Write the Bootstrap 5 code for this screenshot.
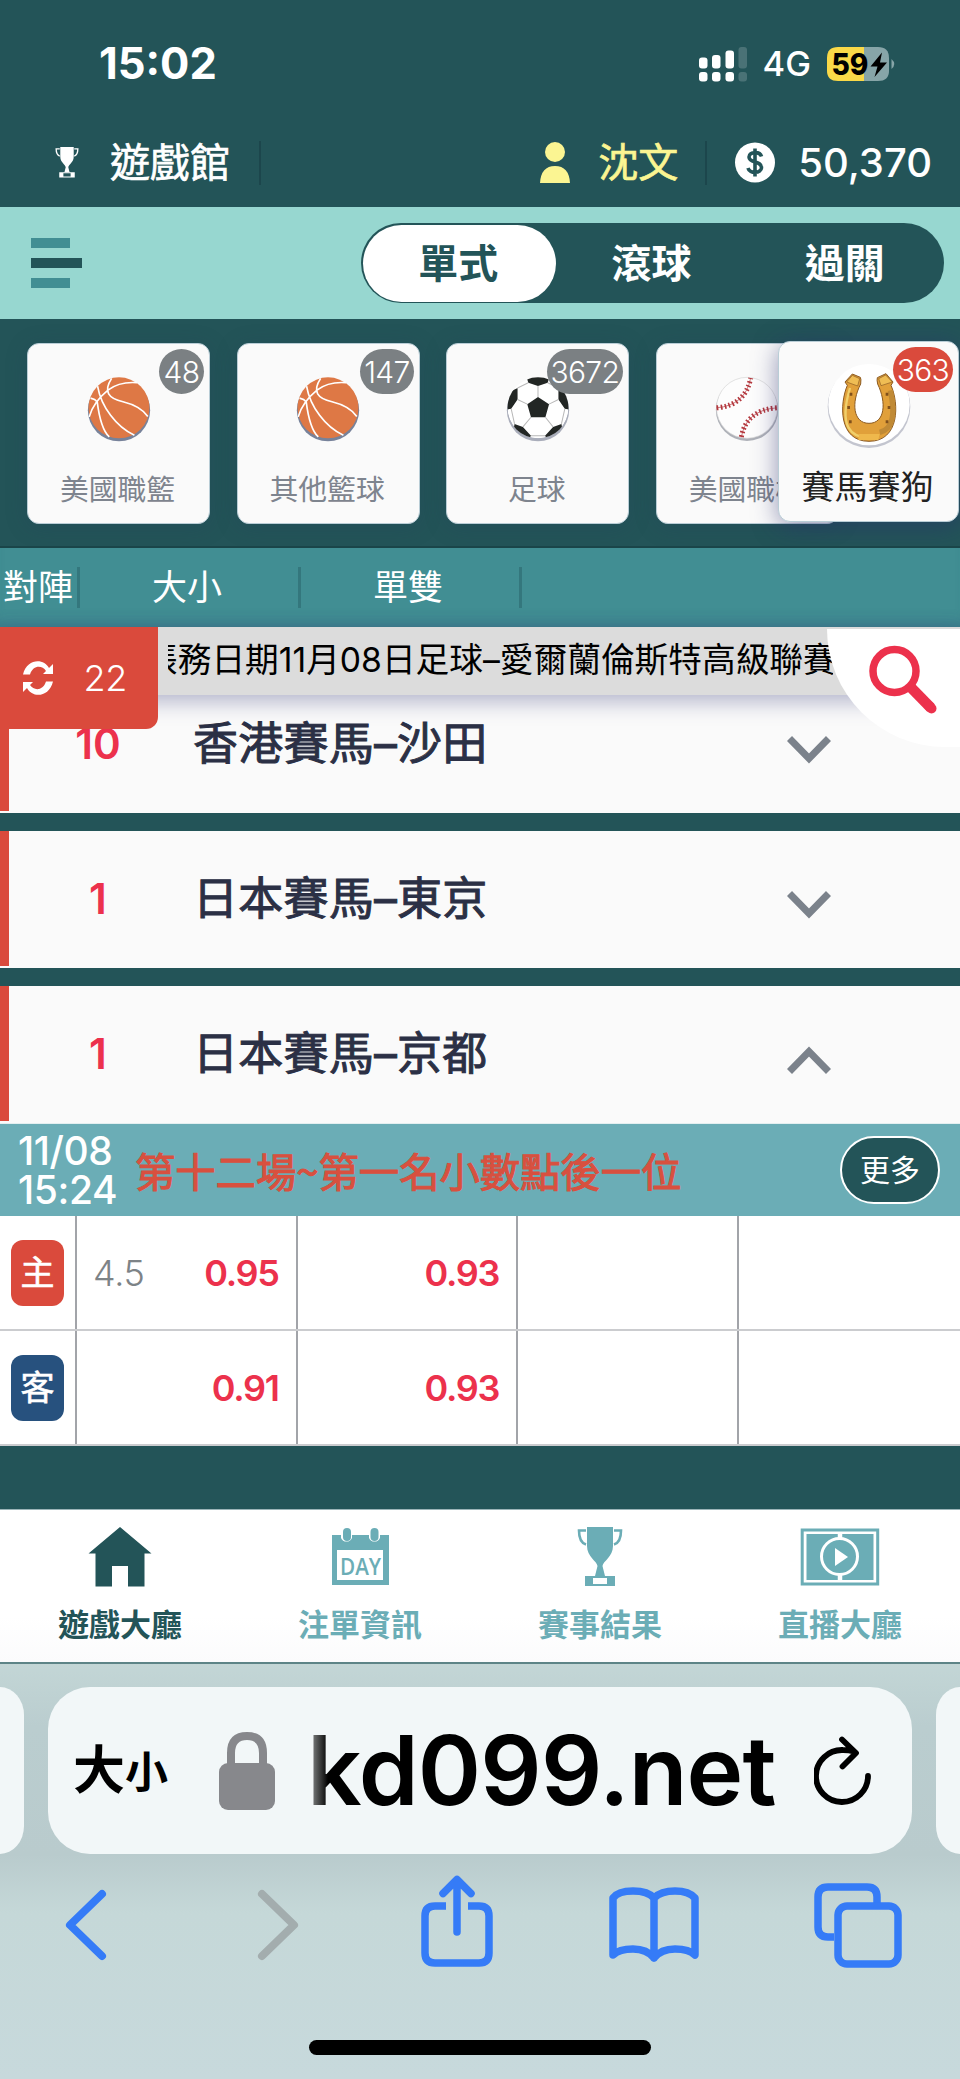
<!DOCTYPE html>
<html lang="zh-Hant">
<head>
<meta charset="utf-8">
<meta name="viewport" content="width=device-width, initial-scale=1">
<title>遊戲大廳</title>
<link rel="stylesheet" href="https://cdn.jsdelivr.net/npm/bootstrap@5.3.0/dist/css/bootstrap.min.css">
<style>
:root{--deep:#235458;--mint:#97d7d0;--teal:#418e93;--sky:#6badb6;--red:#da4a3c;--rose:#ec314c;--ink:#2b3045;--mist:#7b828b}
body{font-family:"Inter","Noto Sans CJK TC",sans-serif;background:var(--deep);width:960px;line-height:1;overflow-x:hidden}
svg{display:block;flex:none}
.status{height:121px;padding:7px 65px 0 99px}
.clock{font-size:43.5px;font-weight:700}
.net{font-size:34.5px;font-weight:500}
.account{height:86px;padding:0 28px 3px 55px;font-size:40px}
.account .hall,.account .user{-webkit-text-stroke:.7px currentColor}
.balance{font-weight:450}
.vline{width:2px;height:44px;background:#1c464c}
.user{color:#fbf592}
.modes{height:112px;background:var(--mint);padding:0 16px 0 31px}
.burger{gap:10px}
.burger i{height:10px;width:39px;background:var(--teal)}
.burger i:nth-child(2){width:51px;background:var(--deep)}
.switch{width:583px;height:80px;border-radius:40px;background:var(--deep);padding:1.5px;font-size:40px;font-weight:700;color:#fff}
.switch span{border-radius:39px;padding:1px 2px 0 0}
.switch .on{background:#fff;color:var(--deep)}
.sports{height:229px;padding:24px 0 0 27px;gap:26.6px;overflow:hidden;border-bottom:2px solid #1a4549}
.tile{width:183px;height:181px;flex:none;border-radius:12px;background:#fafafa;border:1px solid #b9cdd6;box-shadow:0 3px 22px rgba(35,60,90,.22);color:#7e848e;font-size:28.8px;padding-top:32px}
.tile .name{margin:33px 2px 0 0;white-space:nowrap}
.tile.active{right:1px;top:22px;width:181px;color:#222;font-size:33px;padding-top:20px}
.tile.active{box-shadow:0 4px 24px rgba(42,45,110,.5)}
.tile.active .name{margin-top:19px}
.count{top:5px;right:5px;height:45px;min-width:45px;border-radius:23px;background:#7b8083;color:#fff;font-size:30px;font-weight:350;padding:0 4px;letter-spacing:-.7px}
.tile.active .count{background:var(--red)}
.bets{height:79px;background:var(--teal);color:#fff;font-size:35px;box-shadow:inset 0 -12px 12px -8px rgba(40,90,120,.35)}
.bets .sep{width:221px;padding-right:7px;background:linear-gradient(#34777d,#34777d) right 0 top 19px/3px 41px no-repeat}
.bets .sep:first-child{width:80px;justify-content:flex-start!important;padding:0 0 0 3px}
.news{height:68px;background:#dcdcdc;left:0;top:0;width:960px;padding-left:168px;z-index:2;box-shadow:0 6px 22px rgba(70,75,130,.42)}
.news p{font-size:33.7px;height:66px;width:665px;color:#000;white-space:nowrap;overflow:hidden}
.timer{left:0;top:0;width:158px;height:102px;z-index:3;background:var(--red);color:#fff;border-radius:0 0 12px 0;font-size:36px;font-weight:350;padding:0 31px 0 21px;letter-spacing:-.4px}
.find{right:0;top:2px;width:133px;height:118px;z-index:3;background:#fff;border-radius:0 0 0 118px}
.board{padding-top:49px}
.league{height:137px;background:linear-gradient(var(--red),var(--red)) left top/9px 135px no-repeat #fafafa;margin-bottom:18px;color:var(--ink);font-size:45px;padding:0 129px 2px 0}
.league span{-webkit-text-stroke:1px currentColor;letter-spacing:.3px}
.league b{width:193px;padding-left:3px;color:var(--rose);font-size:42px;font-weight:600;text-align:center}
.league svg{margin-top:12px}
.match{height:93px;margin-top:-18px;border-top:1px solid #e4eff0;background:var(--sky);color:#fff;padding:0 20px 0 18px}
.when{font-size:39px;line-height:39px;width:117px;letter-spacing:-.4px;font-weight:500}
.title{font-family:"Noto Sans CJK TC",sans-serif;font-size:40.3px;color:#d8503f;white-space:nowrap;-webkit-text-stroke:1.1px currentColor;padding-top:1px}
.more{width:100px;height:68px;border-radius:34px;border:2px solid #fff;background:var(--deep);color:#fff;font-size:30px}
.odds{height:115px;background:#fff;border-bottom:2px solid #cbcccf;font-size:36px;font-weight:600;color:var(--rose)}
.odds>div{width:220.6px;border-right:2px solid #a2a4a9;padding:0 17px 0 16px;letter-spacing:-1.3px}
.odds>div:first-child{width:77px;padding:0 0 0 11px;letter-spacing:0}
.odds>div:last-child{border:0;width:221px}
.odds small{font-size:36px;font-weight:350;color:#7d8387;letter-spacing:-.3px}
.side{width:53px;height:66px;border-radius:12px;background:var(--red);color:#fff;font-size:34px;-webkit-text-stroke:.6px currentColor;font-weight:400}
.side.away{background:#27517e}
.dock{height:155px;margin-top:63px;border-top:1px solid #9bb4b8;border-bottom:2px solid #5d8487;background:linear-gradient(#fff 70%,#fbfbfc);color:var(--sky);font-size:31px;font-weight:700;padding-top:17px}
.dock>div{width:240px;gap:22px}
.dock .here{color:var(--deep)}
.chrome{height:415px;background:linear-gradient(#c3d6d6 0,#bacdcf 15%,#b9cbcd 46%,#c5d8d8 60%,#c7d9dc 100%)}
.sidetab{width:24px;height:167px;background:#f2f7f8}
.addr{width:864px;height:167px;border-radius:42px;background:#f2f7f8;color:#000;padding:0 41px 0 25px}
.aa{font-weight:700;font-size:52px;width:146px;height:74px}
.aa small{font-size:43px;font-weight:700;padding-top:3px}
.url{font-size:96px;font-weight:600;width:478px;margin-left:27px;letter-spacing:-.8px;background:linear-gradient(90deg,#8a8d8d 8px,#000 26px);-webkit-background-clip:text;background-clip:text;color:transparent;padding:10px 0 12px 5px}
.tools{padding:21px 58px 0 65px}
.homebar{width:342px;height:15px;border-radius:8px;background:#000;margin-top:71px}
</style>
</head>
<body>
<svg width="0" height="0" class="position-absolute">
<defs>
<g id="cup"><path d="M10 0H36V19C36 30 26 34 25.500 39L28 49H18L20.500 39C20 34 10 30 10 19Z"/><path d="M9 3.500H2C2 11 4 16 9 17.500M37 3.500H44C44 11 42 16 37 17.500" fill="none" stroke="currentColor" stroke-width="2.600"/><path fill-rule="evenodd" d="M8 49H38V59H8ZM16 51V57H30V51Z"/></g>
<g id="bball"><circle cx="95" cy="95" r="91" fill="#de7845"/><path d="M10 66Q24 69 30 77Q40 157 66 182M6 122Q18 78 62 42Q97 16 149 20M73 7C47 47 64 67 107 77Q160 90 181 121M31 30C42 92 87 152 141 177" fill="none" stroke="#fff" stroke-width="5"/></g>
</defs>
</svg>

<header class="text-white">
<div class="status d-flex justify-content-between align-items-center">
<span class="clock">15:02</span>
<div class="d-flex align-items-center">
<svg width="48" height="36" viewBox="0 0 48 36" fill="#fff"><rect y="11.500" width="8.500" height="11" rx="3"/><rect x="13" y="9" width="8.500" height="13.500" rx="3"/><rect x="26.500" y="4.500" width="8.500" height="18" rx="3"/><rect x="39.500" y="1" width="8.500" height="21.500" rx="3" opacity=".18"/><rect y="26" width="8.500" height="9.500" rx="3"/><rect x="13" y="26" width="8.500" height="9.500" rx="3"/><rect x="26.500" y="26" width="8.500" height="9.500" rx="3"/><rect x="39.500" y="26" width="8.500" height="9.500" rx="3" opacity=".18"/></svg>
<span class="net ms-3">4G</span>
<svg class="ms-3" width="68" height="35" viewBox="0 0 68 35"><path d="M36 0H51Q62 0 62 11V24Q62 34 51 34H36Z" fill="#87a5a8"/><path d="M11 0H37V34H11Q0 34 0 24V11Q0 0 11 0Z" fill="#fad948"/><path d="M64.500 12Q70 17 64.500 22Z" fill="#87a5a8"/><text x="4.500" y="28" font-size="30" font-weight="800" textLength="37" lengthAdjust="spacingAndGlyphs">59</text><path d="M55 5.500L43.500 19.500H50.500L47.500 30L60 15.500H53Z"/></svg>
</div>
</div>
<div class="account d-flex align-items-center">
<svg width="24" height="31" viewBox="0 0 46 60" fill="currentColor"><use href="#cup"/></svg>
<span class="hall" style="margin-left:31px">遊戲館</span>
<span class="vline" style="margin-left:29px"></span>
<svg class="ms-auto" width="30" height="42" viewBox="0 0 30 42" fill="#fbf592"><ellipse cx="15" cy="10" rx="10" ry="10"/><path d="M0 41Q1 24 15 24T30 41Z"/></svg>
<span class="user" style="margin-left:28px">沈文</span>
<span class="vline" style="margin-left:27px;margin-right:28px"></span>
<svg width="40" height="41" viewBox="0 0 40 41"><circle cx="20" cy="20.500" r="20" fill="#fff"/><path d="M26.500 14.500C25 9 14 9.500 14 15C14 21.500 26.500 18.500 26.500 25.500C26.500 31.500 14.500 32 13 26M20 6.500V34.500" fill="none" stroke="#235458" stroke-width="3.600"/></svg>
<span class="balance" style="margin-left:23px">50,370</span>
</div>
</header>

<nav class="modes d-flex justify-content-between align-items-center">
<div class="burger d-flex flex-column"><i></i><i></i><i></i></div>
<div class="switch d-flex">
<span class="on flex-fill d-flex align-items-center justify-content-center">單式</span>
<span class="flex-fill d-flex align-items-center justify-content-center">滾球</span>
<span class="flex-fill d-flex align-items-center justify-content-center">過關</span>
</div>
</nav>

<section class="sports d-flex position-relative">
<div class="tile position-relative d-flex flex-column align-items-center">
<svg width="64" height="67" viewBox="0 0 190 200"><circle cx="95" cy="102" r="93" fill="#77829a"/><use href="#bball"/></svg>
<span class="name">美國職籃</span><span class="count position-absolute d-flex align-items-center justify-content-center">48</span></div>
<div class="tile position-relative d-flex flex-column align-items-center">
<svg width="64" height="67" viewBox="0 0 190 200"><circle cx="95" cy="102" r="93" fill="#77829a"/><use href="#bball"/></svg>
<span class="name">其他籃球</span><span class="count position-absolute d-flex align-items-center justify-content-center">147</span></div>
<div class="tile position-relative d-flex flex-column align-items-center">
<svg width="64" height="67" viewBox="0 0 190 200"><circle cx="95" cy="102" r="93" fill="#a9adba"/><clipPath id="ballclip"><circle cx="95" cy="95" r="91"/></clipPath><g clip-path="url(#ballclip)"><circle cx="95" cy="95" r="91" fill="#fff"/><g fill="#222624"><path d="M95 63L128 84L117 123H74L63 84ZM60 0H130L124 20L95 30L66 20ZM0 60L22 42L34 36V70L15 98L0 100ZM190 60L168 42L156 36V70L175 98L190 100ZM25 143L50 152L74 178L60 200L20 170ZM165 143L140 152L116 178L130 200L170 170Z"/></g><path d="M95 30V63M34 70L63 84M156 70L128 84M74 123L50 152M117 123L140 152M15 98L25 143M175 98L165 143M74 178H116M34 36L66 20M156 36L124 20" fill="none" stroke="#b8b8b8" stroke-width="3"/></g></svg>
<span class="name">足球</span><span class="count position-absolute d-flex align-items-center justify-content-center">3672</span></div>
<div class="tile position-relative d-flex flex-column align-items-center">
<svg width="64" height="67" viewBox="0 0 190 200"><circle cx="95" cy="101" r="93" fill="#aeb1b8"/><circle cx="95" cy="95" r="91" fill="#fdfdfd" stroke="#d5d5d5" stroke-width="2"/><g fill="none" stroke="#b4383e"><path d="M4 95Q90 88 106 6M184 95Q92 102 78 183" stroke-width="2"/><path d="M4 95Q90 88 106 6M184 95Q92 102 78 183" stroke-width="15" stroke-dasharray="5 7"/></g></svg>
<span class="name">美國職棒</span></div>
<div class="tile active position-absolute d-flex flex-column align-items-center">
<svg width="88" height="90" viewBox="0 0 264 270"><circle cx="132" cy="134" r="124" fill="#c3c5cf"/><circle cx="132" cy="128" r="122" fill="#fff"/><path d="M82 36L106 46Q109 50 107 66C78 122 84 184 132 184S185 122 158 66Q155 54 157 47L183 35L204 60L198 70C222 124 225 238 132 238S44 124 67 70L60 60Z" fill="#e1a03a" stroke="#8c5b22" stroke-width="3"/><path d="M82 40L104 50L98 72L65 60ZM182 39L202 60L168 71L161 50Z" fill="#efbd54" stroke="#8c5b22" stroke-width="2"/><path d="M75 78C40 195 78 226 132 228" fill="none" stroke="#f1d06b" stroke-width="7"/><path d="M196 85C217 180 190 205 164 211" fill="none" stroke="#c08a36" stroke-width="16"/><path d="M102 216H164L160 234H100Z" fill="#efb84c"/><path d="M78 92V101M71 132V141M76 175V184M186 92V101M192 132V141M186 175V184" stroke="#80501c" stroke-width="8"/></svg>
<span class="name">賽馬賽狗</span><span class="count position-absolute d-flex align-items-center justify-content-center">363</span></div>
</section>

<div class="bets d-flex">
<div class="sep d-flex align-items-center justify-content-center">對陣</div>
<div class="sep d-flex align-items-center justify-content-center">大小</div>
<div class="sep d-flex align-items-center justify-content-center">單雙</div>
</div>

<main class="board position-relative">
<div class="news position-absolute"><p class="d-flex align-items-center m-0"><span style="margin-left:-24px">帳務日期11月08日足球–愛爾蘭倫斯特高級聯賽</span></p></div>
<div class="timer position-absolute d-flex align-items-center justify-content-between">
<svg width="34" height="34" viewBox="0 0 34 34" fill="#fff"><path d="M2 13.500C6 -3 23 -3 28 7L32 3V13H22L25 10C21 4 12 4 9 13.500ZM32 20.500C28 37 11 37 6 27L2 31V21H12L9 24C13 30 22 30 25 20.500Z"/></svg>22</div>
<div class="find position-absolute"><svg width="133" height="118" viewBox="0 0 133 118"><circle cx="67.500" cy="42" r="21.500" fill="none" stroke="#ec314c" stroke-width="7.500"/><path d="M83 57.500L104 79" stroke="#ec314c" stroke-width="10.500"/><path d="M102 77L104.500 79.500" stroke="#ec314c" stroke-width="10" stroke-linecap="round"/></svg></div>
<div class="league d-flex align-items-center"><b>10</b><span>香港賽馬–沙田</span><svg class="ms-auto" width="44" height="28" viewBox="0 0 44 28" fill="none" stroke="#7b828b" stroke-width="7"><path d="M2.500 2.500L22 22.500L41.500 2.500"/></svg></div>
<div class="league d-flex align-items-center"><b>1</b><span>日本賽馬–東京</span><svg class="ms-auto" width="44" height="28" viewBox="0 0 44 28" fill="none" stroke="#7b828b" stroke-width="7"><path d="M2.500 2.500L22 22.500L41.500 2.500"/></svg></div>
<div class="league d-flex align-items-center"><b>1</b><span>日本賽馬–京都</span><svg class="ms-auto" width="44" height="28" viewBox="0 0 44 28" fill="none" stroke="#7b828b" stroke-width="7"><path d="M2.500 25.500L22 5.500L41.500 25.500"/></svg></div>
<div class="match d-flex align-items-center">
<div class="when">11/08<br>15:24</div><div class="title">第十二場~第一名小數點後一位</div>
<div class="more ms-auto d-flex align-items-center justify-content-center">更多</div>
</div>
<div class="odds d-flex">
<div class="d-flex align-items-center"><span class="side d-flex align-items-center justify-content-center">主</span></div>
<div class="d-flex align-items-center justify-content-between"><small>4.5</small><span>0.95</span></div>
<div class="d-flex align-items-center justify-content-end">0.93</div><div></div><div></div>
</div>
<div class="odds d-flex">
<div class="d-flex align-items-center"><span class="side away d-flex align-items-center justify-content-center">客</span></div>
<div class="d-flex align-items-center justify-content-end">0.91</div>
<div class="d-flex align-items-center justify-content-end">0.93</div><div></div><div></div>
</div>
</main>

<nav class="dock d-flex">
<div class="here d-flex flex-column align-items-center"><svg width="64" height="60" viewBox="0 0 64 60" fill="currentColor"><path d="M32 0L63.500 26.500H56.500V59.500H40V39H24V59.500H7.500V26.500H.5Z"/></svg><span>遊戲大廳</span></div>
<div class="d-flex flex-column align-items-center"><svg width="57" height="60" viewBox="0 0 57 60"><path fill-rule="evenodd" fill="currentColor" d="M0 8H9V11A6 6 0 0 0 20 11V8H37V11A6 6 0 0 0 48 11V8H57V58H0ZM5 23V53H51V23Z"/><rect x="11" y="1" width="8" height="13" rx="4" fill="currentColor"/><rect x="38.500" y="1" width="8" height="13" rx="4" fill="currentColor"/><text x="8" y="47.500" font-family="Open Sans" font-size="23.500" font-weight="600" fill="currentColor" textLength="41" lengthAdjust="spacingAndGlyphs">DAY</text></svg><span>注單資訊</span></div>
<div class="d-flex flex-column align-items-center"><svg width="46" height="60" viewBox="0 0 46 60" fill="currentColor"><use href="#cup"/></svg><span>賽事結果</span></div>
<div class="d-flex flex-column align-items-center"><svg width="80" height="60" viewBox="0 0 80 60"><rect x="2.200" y="3" width="75.500" height="54" fill="none" stroke="currentColor" stroke-width="3"/><path d="M6.500 7H73.500V53H6.500Z" fill="currentColor"/><path d="M40 7V53" stroke="#fff" stroke-width="4.500"/><circle cx="39.500" cy="29.500" r="18" fill="currentColor" stroke="#fff" stroke-width="3"/><path d="M35 21V39L48 30Z" fill="#fff"/></svg><span>直播大廳</span></div>
</nav>

<footer class="chrome d-flex flex-column align-items-center">
<div class="w-100 d-flex justify-content-between" style="padding-top:23px">
<div class="sidetab" style="border-radius:0 36px 36px 0/0 42px 42px 0"></div>
<div class="addr d-flex align-items-center">
<div class="aa d-flex align-items-center">大<small>小</small></div>
<svg width="56" height="78" viewBox="0 0 56 78"><path d="M12 36V21Q12 4 28 4T44 21V36" fill="none" stroke="#87888c" stroke-width="8"/><rect y="31" width="56" height="47" rx="9" fill="#87888c"/></svg>
<span class="url">kd099.net</span>
<svg class="ms-auto" width="57" height="70" viewBox="0 0 57 70" fill="none" stroke="#000" stroke-width="5.800" stroke-linecap="round" stroke-linejoin="round"><path d="M40 15.500Q35 14 29 14A26 26 0 1 0 54 40M28 3.500L42 17L28.500 30.500"/></svg>
</div>
<div class="sidetab" style="border-radius:36px 0 0 36px/42px 0 0 42px"></div>
</div>
<div class="tools w-100 d-flex">
<svg width="42" height="94" viewBox="0 0 42 94" fill="none" stroke="#357bf7" stroke-width="8" stroke-linecap="round" stroke-linejoin="round"><path d="M37 19L5 50L37 81"/></svg>
<svg style="margin-left:150px" width="42" height="94" viewBox="0 0 42 94" fill="none" stroke="#a3adae" stroke-width="8" stroke-linecap="round" stroke-linejoin="round"><path d="M5 19L37 50L5 81"/></svg>
<svg style="margin-left:122px" width="72" height="94" viewBox="0 0 72 94" fill="none" stroke="#357bf7" stroke-width="7.500"><path d="M25 31H14Q4 31 4 41V78Q4 88 14 88H58Q68 88 68 78V41Q68 31 58 31H47"/><path d="M36 57V6M22 18.500L36 4.500L50 18.500" stroke-linecap="round" stroke-linejoin="round"/></svg>
<svg style="margin-left:116px" width="90" height="94" viewBox="0 0 90 94" fill="none" stroke="#357bf7" stroke-width="7.500" stroke-linejoin="round" stroke-linecap="round"><path d="M45 83V23Q39 16 24 16T4 23V80Q10 74 24 74T45 83Q52 74 66 74T86 80V23Q80 16 66 16T45 23"/></svg>
<svg class="ms-auto" width="88" height="94" viewBox="0 0 88 94" fill="none" stroke="#357bf7" stroke-width="7.500"><path d="M20 62H14Q4 62 4 52V22Q4 12 14 12H53Q63 12 63 22V28"/><rect x="24" y="31" width="60" height="58" rx="9"/></svg>
</div>
<div class="homebar"></div>
</footer>
<script src="https://cdn.jsdelivr.net/npm/bootstrap@5.3.0/dist/js/bootstrap.bundle.min.js"></script>
</body>
</html>
